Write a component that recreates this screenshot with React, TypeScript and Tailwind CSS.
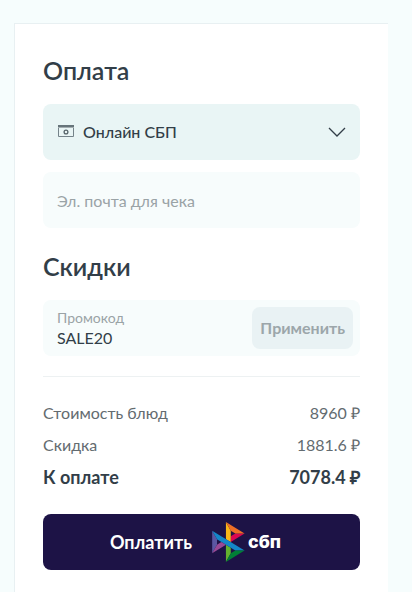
import { useState } from "react"

interface SummaryRow {
  label: string
  value: string
  total?: boolean
}

const rows: SummaryRow[] = [
  { label: "Стоимость блюд", value: "8960 ₽" },
  { label: "Скидка", value: "1881.6 ₽" },
  { label: "К оплате", value: "7078.4 ₽", total: true },
]

const CashIcon = () => (
  <svg className="pointer-events-none absolute left-[15px] top-[21px]" width="16" height="12" viewBox="0 0 16 12" aria-hidden="true">
    <path d="M0 0h16v2H0z" fill="#66747a" />
    <path d="M0 2h16v1H0z" fill="#a3aeb1" />
    <path d="M.5 3v8.5h15V3" fill="none" stroke="#75838a" />
    <circle cx="8" cy="7" r="1.9" fill="none" stroke="#56646a" strokeWidth="1.3" />
  </svg>
)

const ChevronIcon = () => (
  <svg className="pointer-events-none absolute right-[14px] top-[23px]" width="18" height="11" viewBox="0 0 18 11" aria-hidden="true">
    <path d="M1 1l8 8 8-8" fill="none" stroke="#323e48" strokeWidth="1.3" />
  </svg>
)

const SbpLogo = () => (
  <svg width="33" height="40" viewBox="0 0 98 120" aria-hidden="true">
    <path d="M0 26.12l14.532 25.975v15.844L.017 93.863z" fill="#5B57A2" />
    <path d="M55.797 42.643l13.617-8.346 27.868-.026-41.485 25.414z" fill="#D90751" />
    <path d="M55.72 25.967l.077 34.39-14.566-8.95V0z" fill="#FAB718" />
    <path d="M97.282 34.271l-27.869.026-13.693-8.33L41.231 0z" fill="#ED6F26" />
    <path d="M55.797 94.007V77.322l-14.566-8.78.008 51.458z" fill="#63B22F" />
    <path d="M69.38 85.737L14.531 52.095 0 26.12l97.223 59.583z" fill="#1487C9" />
    <path d="M41.24 120l14.556-25.993 13.583-8.27 27.843-.034z" fill="#017F36" />
    <path d="M.017 93.863l41.333-25.32-13.896-8.526-12.922 7.922z" fill="#984995" />
  </svg>
)

const App = () => {
  const [method, setMethod] = useState("sbp")
  const [email, setEmail] = useState("")
  const [promo, setPromo] = useState("SALE20")

  return (
    <div className="min-h-screen bg-[#f6fdfd] pl-[14px] pr-6 pt-[23px] font-['Lato','Liberation_Sans',sans-serif] text-[#323e48]">
      <form className="min-h-[calc(100vh-23px)] border-l border-t border-[#e8f0f2] bg-white px-7 pb-[22px] pt-7" onSubmit={(e) => e.preventDefault()}>
        <h2 className="mb-4 text-[25px] font-semibold leading-9">Оплата</h2>

        <div className="relative">
          <CashIcon />
          <select
            aria-label="Способ оплаты"
            value={method}
            onChange={(e) => setMethod(e.target.value)}
            className="block h-14 w-full appearance-none rounded-lg bg-[#e9f5f5] pl-10 pr-10 text-base font-medium outline-none"
          >
            <option value="sbp">Онлайн СБП</option>
            <option value="cash">Наличные</option>
          </select>
          <ChevronIcon />
        </div>

        <input
          type="email"
          aria-label="Эл. почта для чека"
          placeholder="Эл. почта для чека"
          value={email}
          onChange={(e) => setEmail(e.target.value)}
          className="mt-3 block h-14 w-full rounded-lg bg-[#f7fcfc] px-[14px] text-base outline-none placeholder:text-[#9aa3a6]"
        />

        <h2 className="mb-4 mt-5 text-[25px] font-semibold leading-9">Скидки</h2>

        <div className="flex h-14 items-center rounded-lg bg-[#f7fcfc] pl-[14px] pr-[7px]">
          <div className="min-w-0 flex-1">
            <label htmlFor="promo" className="block text-sm leading-5 text-[#9aa3a6]">Промокод</label>
            <input
              id="promo"
              value={promo}
              onChange={(e) => setPromo(e.target.value)}
              className="block h-5 w-full bg-transparent text-base leading-5 outline-none"
            />
          </div>
          <button type="button" disabled className="h-[42px] rounded-lg bg-[#e9f2f4] px-2 text-base font-bold text-[#9ca6aa]">
            Применить
          </button>
        </div>

        <hr className="mt-5 border-[#edf1f2]" />

        <dl className="mt-5">
          {rows.map((row) => (
            <div
              key={row.label}
              className={row.total ? "flex h-8 items-center justify-between text-lg font-bold" : "flex h-8 items-center justify-between text-base text-[#636b70]"}
            >
              <dt>{row.label}</dt>
              <dd>{row.value}</dd>
            </div>
          ))}
        </dl>

        <button type="submit" className="mt-[21px] flex h-14 w-full items-center justify-center gap-5 rounded-lg bg-[#1d1346] pr-3 text-lg font-bold text-white">
          Оплатить
          <span className="flex items-center gap-[3px]">
            <SbpLogo />
            <span className="font-['Inter','Liberation_Sans',sans-serif] text-lg font-extrabold">сбп</span>
          </span>
        </button>
      </form>
    </div>
  )
}

export default App
